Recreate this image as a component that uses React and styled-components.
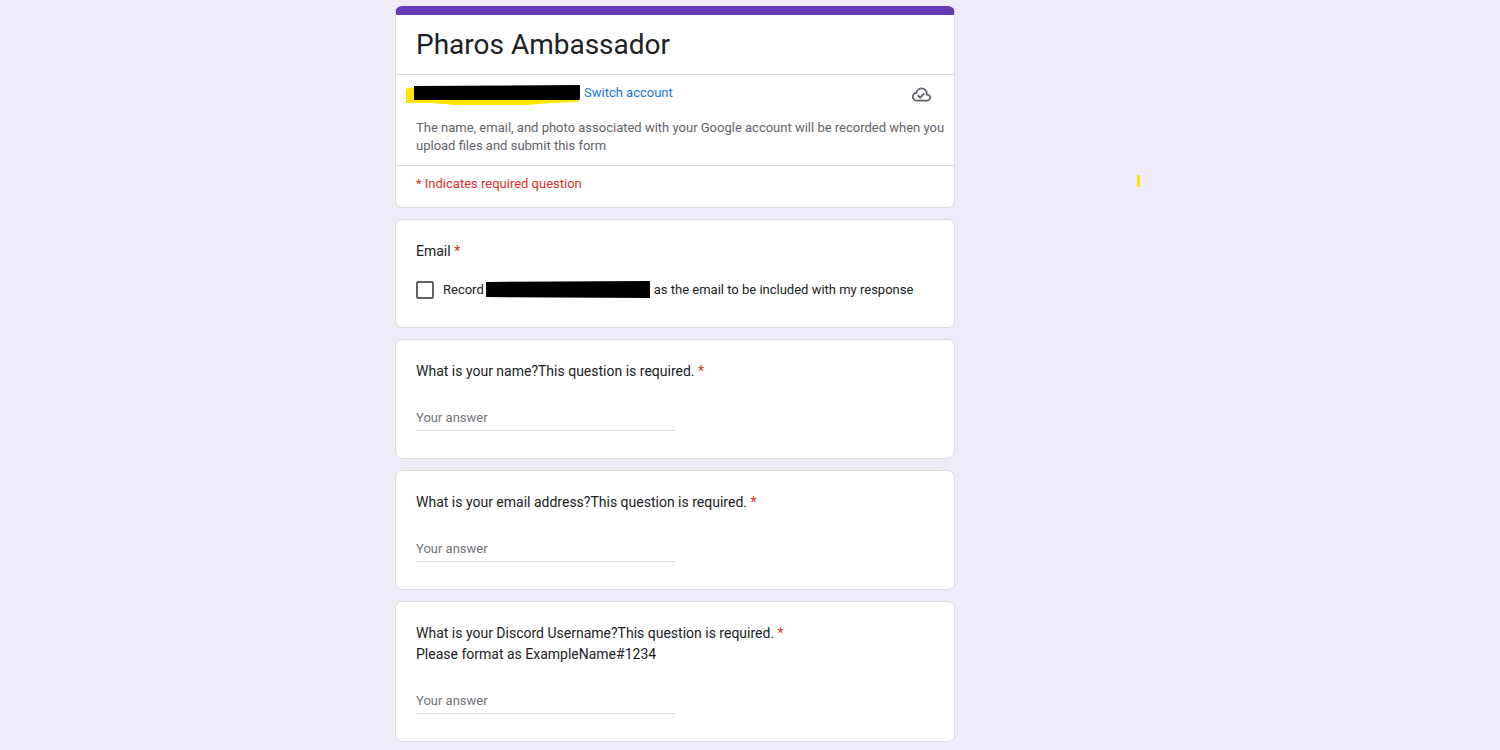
import React, { Component } from "react";
import styled, { createGlobalStyle } from "styled-components";

const borderColor = "#dadce0";
const accent = "#673ab7";
const textColor = "#202124";
const mutedColor = "#5f6368";
const errorColor = "#d93025";

const GlobalStyle = createGlobalStyle`
	* {
		box-sizing: border-box;
	}

	body {
		margin: 0;
		background-color: #f0ebf8;
		color: ${textColor};
		font-family: Roboto, Arial, sans-serif;
		font-size: 13px;
		line-height: 18px;
	}
`;

const Page = styled.main`
	position: relative;
	display: flex;
	justify-content: center;
	min-height: 100vh;
	overflow: hidden;
	padding: 6px 10% 0 0;
`;

const Form = styled.form`
	display: flex;
	flex-direction: column;
	gap: 11px;
	width: 100%;
	max-width: 560px;
`;

const Card = styled.section`
	background-color: white;
	border: 1px solid ${borderColor};
	border-radius: 7px;
`;

const HeaderCard = styled(Card)`
	border-top: 9px solid ${accent};
	overflow: hidden;
`;

const QuestionCard = styled(Card)`
	padding: 21px 20px 27px;
`;

const HeaderRow = styled.div`
	padding: 9px 22px 10px 20px;

	& + & {
		border-top: 1px solid ${borderColor};
	}
`;

const TitleRow = styled.header`
	padding: 10px 20px 9px;
	border-bottom: 1px solid ${borderColor};
`;

const Title = styled.h1`
	margin: 0;
	font-size: 28px;
	font-weight: 400;
	line-height: 40px;
`;

const Account = styled.div`
	display: flex;
	align-items: flex-start;
	margin-bottom: 14px;
`;

const SwitchLink = styled.a`
	flex: 1;
	margin-left: 3px;
	color: #1a73e8;
	text-decoration: none;
`;

const Notice = styled.p`
	margin: 0 -16px 0 0;
	color: ${mutedColor};
`;

const Required = styled.p`
	margin: 0 0 4px;
	color: ${errorColor};
`;

const Star = styled.span`
	color: ${errorColor};
`;

const Question = styled.label`
	display: block;
	font-size: 14px;
	line-height: 21px;
	white-space: pre-line;
`;

const Answer = styled.input`
	display: block;
	width: 50%;
	height: 28px;
	margin-top: 21px;
	padding: 1px 0 0;
	border: none;
	border-bottom: 1px solid ${borderColor};
	outline: none;
	background: none;
	color: ${textColor};
	font: inherit;

	&::placeholder {
		color: #70757a;
		opacity: 1;
	}

	&:focus {
		border-color: ${accent};
	}
`;

const Record = styled.label`
	display: flex;
	align-items: center;
	margin-top: 18px;
`;

const Checkbox = styled.input`
	appearance: none;
	width: 18px;
	height: 18px;
	margin: 0 9px 0 0;
	border: 2px solid ${mutedColor};
	border-radius: 2px;

	&:checked {
		background-color: ${accent};
	}
`;

const Redacted = styled.svg`
	flex: none;
	display: block;
	margin: 0 4px 0 2px;
`;

const Highlighted = styled.svg`
	flex: none;
	display: block;
	margin-left: -10px;
`;

const Marker = styled.span`
	position: absolute;
	top: 175px;
	left: calc(50% + 387px);
	width: 3px;
	height: 12px;
	background-color: #ffe500;
`;

const CloudDone = () => (
	<svg width="21" height="21" viewBox="0 -960 960 960" fill={mutedColor}>
		<path d="m414-280 226-226-58-58-169 169-84-84-57 57 142 142ZM260-160q-91 0-155.5-63T40-377q0-78 47-139t123-78q25-92 100-149t170-57q117 0 198.5 81.5T760-520q69 8 114.5 59.5T920-340q0 75-52.5 127.5T740-160H260Zm0-80h480q42 0 71-29t29-71q0-42-29-71t-71-29h-60v-80q0-83-58.5-141.5T480-720q-83 0-141.5 58.5T280-520h-20q-58 0-99 41t-41 99q0 58 41 99t99 41Z" />
	</svg>
);

const questions = [
	{ id: "name", text: "What is your name?This question is required." },
	{ id: "address", text: "What is your email address?This question is required." },
	{
		id: "discord",
		text: "What is your Discord Username?This question is required.",
		hint: "Please format as ExampleName#1234"
	}
];

class App extends Component {
	render() {
		return (
			<Page>
				<GlobalStyle />
				<Form onSubmit={e => e.preventDefault()}>
					<HeaderCard>
						<TitleRow>
							<Title>Pharos Ambassador</Title>
						</TitleRow>
						<HeaderRow>
							<Account>
								<Highlighted width="175" height="21" viewBox="0 0 175 21">
									<path
										d="M0 5L2 4L8 3L174 2V15L171 18L145 19L120 21H50L25 19L0 19Z"
										fill="#ffe500"
									/>
									<path d="M8 2L174 1V15L173 16H8Z" />
								</Highlighted>
								<SwitchLink href="#switch">Switch account</SwitchLink>
								<CloudDone />
							</Account>
							<Notice>
								The name, email, and photo associated with your Google
								account will be recorded when you upload files and
								submit this form
							</Notice>
						</HeaderRow>
						<HeaderRow>
							<Required>* Indicates required question</Required>
						</HeaderRow>
					</HeaderCard>

					<QuestionCard>
						<Question as="div">
							Email <Star>*</Star>
						</Question>
						<Record>
							<Checkbox type="checkbox" />
							Record
							<Redacted width="164" height="20" viewBox="0 0 164 20">
								<path d="M0 2L164 1V18L0 17Z" />
							</Redacted>
							as the email to be included with my response
						</Record>
					</QuestionCard>

					{questions.map(({ id, text, hint }) => (
						<QuestionCard key={id}>
							<Question htmlFor={id}>
								{text} <Star>*</Star>
								{hint && "\n" + hint}
							</Question>
							<Answer id={id} type="text" placeholder="Your answer" />
						</QuestionCard>
					))}
				</Form>
				<Marker />
			</Page>
		);
	}
}

export default App;
